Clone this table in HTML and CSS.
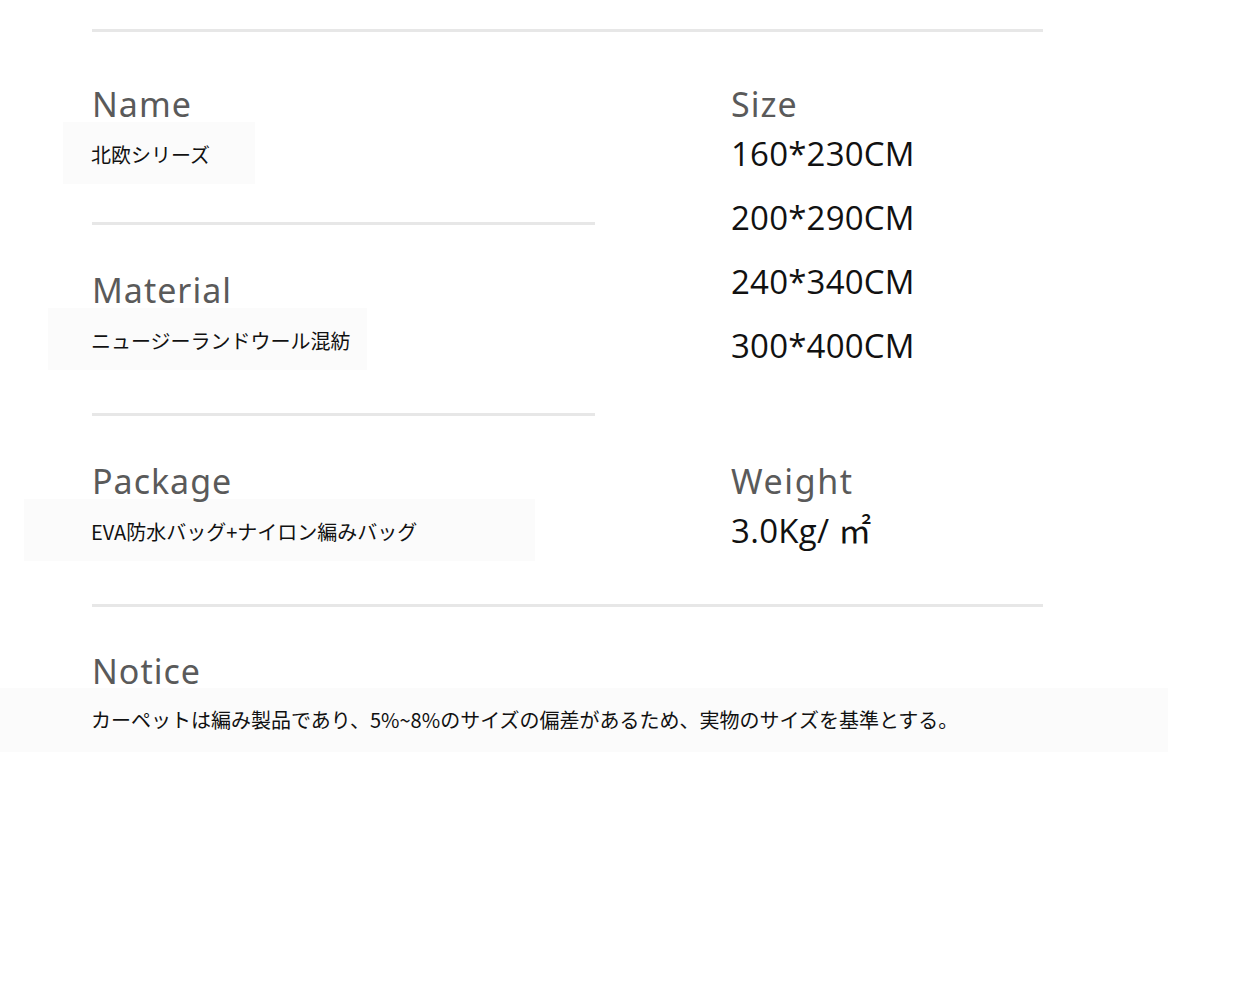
FILE: index.html
```html
<!DOCTYPE html>
<html lang="ja">
<head>
<meta charset="utf-8">
<title>Product details</title>
<link rel="stylesheet" href="styles.css">
</head>
<body>
<main class="sheet">
  <div class="rule rule-full"></div>

  <div class="specs">
    <div class="col">
      <section class="item item-first">
        <h2 class="label">Name</h2>
        <p class="value box-name">北欧シリーズ</p>
      </section>
      <div class="rule rule-half rule-a"></div>
      <section class="item">
        <h2 class="label">Material</h2>
        <p class="value box-material">ニュージーランドウール混紡</p>
      </section>
      <div class="rule rule-half rule-b"></div>
    </div>
    <div class="col">
      <section class="item item-first">
        <h2 class="label">Size</h2>
        <ul class="sizes">
          <li>160*230CM</li>
          <li>200*290CM</li>
          <li>240*340CM</li>
          <li>300*400CM</li>
        </ul>
      </section>
    </div>
  </div>

  <div class="specs">
    <section class="item">
      <h2 class="label">Package</h2>
      <p class="value box-package">EVA防水バッグ+ナイロン編みバッグ</p>
    </section>
    <section class="item">
      <h2 class="label label-wide">Weight</h2>
      <p class="big">3.0Kg/ ㎡</p>
    </section>
  </div>

  <div class="rule rule-full rule-c"></div>

  <section class="item item-notice">
    <h2 class="label">Notice</h2>
    <p class="value box-notice">カーペットは編み製品であり、5%~8%のサイズの偏差があるため、実物のサイズを基準とする。</p>
  </section>
</main>
</body>
</html>
```

FILE: styles.css
```css
* {
  box-sizing: border-box;
}

html,
body {
  margin: 0;
  padding: 0;
  background: #ffffff;
}

body {
  width: 1242px;
  height: 994px;
  overflow: hidden;
  font-family: "Noto Sans", "Open Sans", "Noto Sans CJK JP", sans-serif;
}

.sheet {
  padding: 29px 0 0 92px;
}

.rule {
  height: 3px;
  background: #e7e7e7;
}

.rule-full {
  width: 951px;
}

.rule-half {
  width: 503px;
}

.rule-a {
  margin-top: 38px;
}

.rule-b {
  margin-top: 43px;
}

.rule-c {
  margin-top: 41px;
}

.specs {
  display: grid;
  grid-template-columns: 639px 1fr;
}

.item {
  padding-top: 45px;
}

.item-first {
  padding-top: 52px;
}

.item-notice {
  padding-top: 44px;
}

.label {
  margin: 0;
  font-family: "Noto Sans", "Open Sans", sans-serif;
  font-weight: 400;
  font-size: 34px;
  line-height: 40px;
  letter-spacing: 1px;
  color: #5a5a5a;
}

.label-wide {
  letter-spacing: 1.6px;
}

.value {
  display: block;
  margin: -2px 0 0;
  padding: 18px 0 14px;
  font-family: "Noto Sans CJK JP", "Noto Sans", sans-serif;
  font-size: 20px;
  line-height: 30px;
  color: #111111;
  background: #fbfbfb;
  white-space: nowrap;
}

.box-name {
  margin-left: -29px;
  padding-left: 28px;
  width: 192px;
}

.box-material {
  margin-left: -44px;
  padding-left: 43px;
  width: 319px;
}

.box-package {
  margin-left: -68px;
  padding-left: 67px;
  width: 511px;
}

.box-notice {
  margin-top: -3px;
  padding-top: 17px;
  padding-bottom: 17px;
  margin-left: -92px;
  padding-left: 91px;
  width: 1168px;
}

.sizes {
  list-style: none;
  margin: -2px 0 0;
  padding: 0;
}

.sizes li,
.big {
  font-family: "Open Sans", "Noto Sans CJK JP", sans-serif;
  font-size: 33px;
  line-height: 64px;
  letter-spacing: 0.2px;
  color: #111111;
}

.big {
  margin: -2px 0 0;
  letter-spacing: 0.3px;
}
```
